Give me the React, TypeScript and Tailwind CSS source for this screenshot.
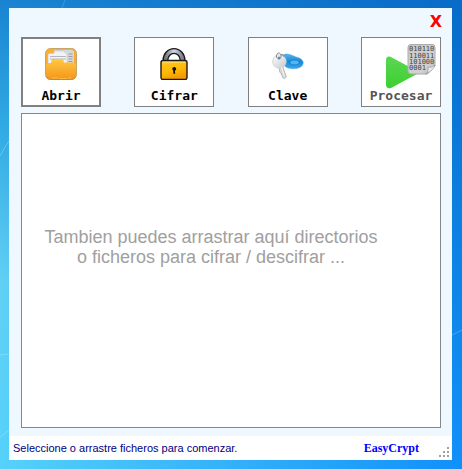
import type { ReactNode } from "react";

function FolderIcon() {
  return (
    <svg width="32" height="32" viewBox="0 0 32 32" aria-hidden="true">
      <defs>
        <linearGradient id="folderBack" x1="0" y1="0" x2="0" y2="1">
          <stop offset="0" stopColor="#ffb030" />
          <stop offset="1" stopColor="#e9a03a" />
        </linearGradient>
        <linearGradient id="folderFront" x1="0" y1="0" x2="0" y2="1">
          <stop offset="0" stopColor="#ffc843" />
          <stop offset="1" stopColor="#f6981b" />
        </linearGradient>
      </defs>
      <rect x="0.5" y="0.5" width="31" height="31" rx="5" fill="url(#folderBack)" stroke="#c9a565" />
      <path d="M9 3q0-1 1-1h16q3 0 3 3v12H9z" fill="#d4d7db" />
      <path d="M3 7q0-1.500 1.500-1.500h4l1.500-2.500h8l4 3v14H3z" fill="#f1f2f4" stroke="#c6c8cc" strokeWidth="0.6" />
      <path d="M5 8.500h16M5 11h16" stroke="#b4b8be" strokeWidth="1" />
      <path d="M23.500 6h4M23.500 8.500h4M23.500 11h4M23.500 13.500h4" stroke="#9a9ea4" strokeWidth="1" />
      <path d="M.8 17.500Q1 15 3.500 15H6l1-4h11l1 3.500h9.500Q31 14.500 31.200 17l-.7 11q-.4 2.500-3 2.500H4.500Q2 30.500 1.600 28z" fill="url(#folderFront)" />
      <path d="M1.500 29q1.500 2.500 4 2.500h21q2.500 0 4-2.500" fill="none" stroke="#c78a38" strokeWidth="1" />
      <path d="M7 30h6M14 30.500h8M23 30h3" stroke="#ffb83f" strokeWidth="1" />
    </svg>
  );
}

function LockIcon() {
  return (
    <svg width="32" height="32" viewBox="0 0 32 32" aria-hidden="true">
      <defs>
        <linearGradient id="lockBody" x1="0" y1="0" x2="0.4" y2="1">
          <stop offset="0" stopColor="#ffc928" />
          <stop offset="0.6" stopColor="#ffb905" />
          <stop offset="1" stopColor="#f59a00" />
        </linearGradient>
        <linearGradient id="lockShackle" x1="0" y1="0" x2="1" y2="0">
          <stop offset="0" stopColor="#737981" />
          <stop offset="0.5" stopColor="#d3d8df" />
          <stop offset="1" stopColor="#7c828c" />
        </linearGradient>
      </defs>
      <path d="M7.500 15v-3a8.500 9 0 0 1 17 0v3" fill="none" stroke="#171719" strokeWidth="6" />
      <path d="M7.500 15v-3a8.500 9 0 0 1 17 0v3" fill="none" stroke="url(#lockShackle)" strokeWidth="3.400" />
      <rect x="3" y="12.500" width="26" height="19" rx="2" fill="url(#lockBody)" stroke="#1d1a12" strokeWidth="1.400" />
      <path d="M4.500 14.300h23" stroke="#ffdc62" />
      <path d="M14.200 21a2 2 0 1 1 3.700 1l-1 .8.300 3h-1.800l-.2-3z" fill="#171307" />
    </svg>
  );
}

function KeyIcon() {
  return (
    <svg width="32" height="32" viewBox="0 0 32 32" aria-hidden="true">
      <defs>
        <linearGradient id="fob" x1="0" y1="0" x2="0" y2="1">
          <stop offset="0" stopColor="#58b5ee" />
          <stop offset="0.5" stopColor="#1689d8" />
          <stop offset="1" stopColor="#3aa8f1" />
        </linearGradient>
        <linearGradient id="keyMetal" x1="0" y1="0" x2="1" y2="1">
          <stop offset="0" stopColor="#fff" />
          <stop offset="1" stopColor="#c6c8cc" />
        </linearGradient>
      </defs>
      <path d="M10 8c4-4 9-1 14 1 5 1 8 4 7 7-1 5-12 6-17 3-3-2-6-8-4-11z" fill="url(#fob)" stroke="#489bd1" strokeWidth="0.5" />
      <ellipse cx="22.500" cy="14.500" rx="4.500" ry="2.400" fill="#50b7f5" stroke="#1174bd" strokeWidth="0.7" />
      <path d="M7 18l3.500 0 3.800 11-1.800 1.600-2-1-.1-2-1.300-.8.200-1.500-1.500-1z" fill="#d7d8da" stroke="#a2a4a8" strokeWidth="0.7" />
      <circle cx="7.500" cy="13.500" r="6.800" fill="url(#keyMetal)" stroke="#c6c7ca" strokeWidth="0.7" />
      <path d="M9.500 19l3 9.500" stroke="#f8f8f8" strokeWidth="0.9" />
      <circle cx="7" cy="10" r="1.600" fill="#5a8eb3" />
      <path d="M4.500 9.500C4 5 7 4 8.500 6c1 1.500 1 4-1.500 4.500M9 7c1.500-1 3 0 3 1.500" fill="none" stroke="#777f86" strokeWidth="1" />
    </svg>
  );
}

function ProcessIcon() {
  return (
    <svg width="50" height="45" viewBox="0 0 50 45" aria-hidden="true">
      <defs>
        <linearGradient id="play" x1="0" y1="0" x2="0" y2="1">
          <stop offset="0" stopColor="#5bd653" />
          <stop offset="1" stopColor="#3cd02f" />
        </linearGradient>
        <linearGradient id="sheet" x1="0" y1="0" x2="1" y2="1">
          <stop offset="0" stopColor="#c9c9c9" />
          <stop offset="0.7" stopColor="#d2d2d2" />
          <stop offset="1" stopColor="#b2b2b2" />
        </linearGradient>
      </defs>
      <path d="M0 16q0-4 4-3.500L31 27q2 1.500 0 3L5 44q-5 1-5-3.500z" fill="url(#play)" />
      <path d="M24.500 .5h22q2.500 0 2.500 3V22l-7.500 8H25q-3 0-3-3V3.500q0-3 2.500-3z" fill="url(#sheet)" stroke="#aaa" />
      <path d="M39.500 30q3.500-2 2.500-7 3.500 1.500 7-2-1 5-9.500 9z" fill="#eee" stroke="#999" strokeWidth="0.7" />
      <text fill="#444" fontFamily="'DejaVu Sans Mono', monospace" fontSize="7" fontWeight="400">
        <tspan x="23" y="7">010110</tspan>
        <tspan x="23" y="14">110011</tspan>
        <tspan x="23" y="20">101000</tspan>
        <tspan x="23" y="26">0001</tspan>
      </text>
    </svg>
  );
}

type ToolButtonProps = {
  label: string;
  children: ReactNode;
  active?: boolean;
  disabled?: boolean;
};

function ToolButton({ label, children, active, disabled }: ToolButtonProps) {
  return (
    <button
      type="button"
      disabled={disabled}
      className={`flex h-[70px] w-20 flex-col items-center justify-end border-[#808080] bg-white font-['DejaVu_Sans_Mono',monospace] text-[13px] leading-4 font-bold ${
        active ? "border-2 pb-px" : "border pb-0.5"
      } ${disabled ? "text-[#555]" : "text-black"}`}
    >
      {children}
      <span>{label}</span>
    </button>
  );
}

function Wallpaper() {
  return (
    <svg
      className="absolute inset-0 size-full"
      viewBox="0 0 462 469"
      preserveAspectRatio="none"
      aria-hidden="true"
    >
      <defs>
        <linearGradient id="sky" x1="0" y1="0" x2="0" y2="1">
          <stop offset="0" stopColor="#1a84d2" />
          <stop offset="0.25" stopColor="#2fa8e2" />
          <stop offset="0.6" stopColor="#62d0f4" />
          <stop offset="1" stopColor="#55d2fb" />
        </linearGradient>
        <linearGradient id="deep" x1="0" y1="0" x2="0" y2="1">
          <stop offset="0" stopColor="#086bc8" />
          <stop offset="0.5" stopColor="#0c80e2" />
          <stop offset="1" stopColor="#1090fa" />
        </linearGradient>
        <linearGradient id="fade" x1="0" y1="0" x2="1" y2="0">
          <stop offset="0" stopColor="#000" />
          <stop offset="1" stopColor="#fff" />
        </linearGradient>
        <mask id="toRight">
          <rect width="462" height="469" fill="url(#fade)" />
        </mask>
      </defs>
      <rect width="462" height="469" fill="url(#sky)" />
      <rect width="462" height="469" fill="url(#deep)" mask="url(#toRight)" />
      <g fill="none" stroke="#c8f4ff" strokeOpacity="0.3">
        <path d="M0 156Q4 148 9 141" />
        <path d="M0 355L9 354" />
        <path d="M0 437Q5 434 9 430" />
        <path d="M452 335L462 330" />
        <path d="M62 8L65 0" strokeOpacity="0.2" />
      </g>
    </svg>
  );
}

const gripDots = [
  [8, 0],
  [4, 4],
  [8, 4],
  [0, 8],
  [4, 8],
  [8, 8],
];

export default function App() {
  return (
    <div className="relative flex min-h-screen flex-col pt-2 pr-[10px] pb-[9px] pl-[9px] font-['Liberation_Sans',Arial,sans-serif]">
      <Wallpaper />
      <div className="relative flex grow flex-col bg-[#f0f8ff]">
        <header className="flex justify-end px-1 pt-1">
          <button
            type="button"
            aria-label="Cerrar"
            className="h-5 w-6 font-['DejaVu_Sans',sans-serif] text-[16px] leading-5 font-bold text-[#ff0000]"
          >
            X
          </button>
        </header>
        <main className="flex grow flex-col gap-1.5 pt-[5px] pr-[11px] pb-2 pl-3">
          <div className="flex justify-between">
            <ToolButton label="Abrir" active>
              <span className="mb-2">
                <FolderIcon />
              </span>
            </ToolButton>
            <ToolButton label="Cifrar">
              <span className="mb-2">
                <LockIcon />
              </span>
            </ToolButton>
            <ToolButton label="Clave">
              <span className="mb-2">
                <KeyIcon />
              </span>
            </ToolButton>
            <ToolButton label="Procesar" disabled>
              <span className="-mb-px ml-5">
                <ProcessIcon />
              </span>
            </ToolButton>
          </div>
          <section className="flex grow flex-col items-center border border-[#828790] bg-white pt-[113px] pr-10">
            <p className="text-center text-[18px] leading-5 text-[#a0a0a0]">
              Tambien puedes arrastrar aquí directorios
              <br />o ficheros para cifrar / descifrar ...
            </p>
          </section>
        </main>
        <footer className="flex h-6 items-center bg-white pr-[3px] pl-1">
          <span className="grow text-[11px] text-[#000080]">
            Seleccione o arrastre ficheros para comenzar.
          </span>
          <span className="mr-5 font-['Liberation_Serif',serif] text-[12px] font-bold text-[#0000ff]">
            EasyCrypt
          </span>
          <svg className="mb-[3px] self-end" width="10" height="10" viewBox="0 0 10 10" aria-hidden="true">
            {gripDots.map(([x, y]) => (
              <rect key={`${x}-${y}`} x={x} y={y} width="2" height="2" fill="#a0a0a0" />
            ))}
          </svg>
        </footer>
      </div>
    </div>
  );
}
